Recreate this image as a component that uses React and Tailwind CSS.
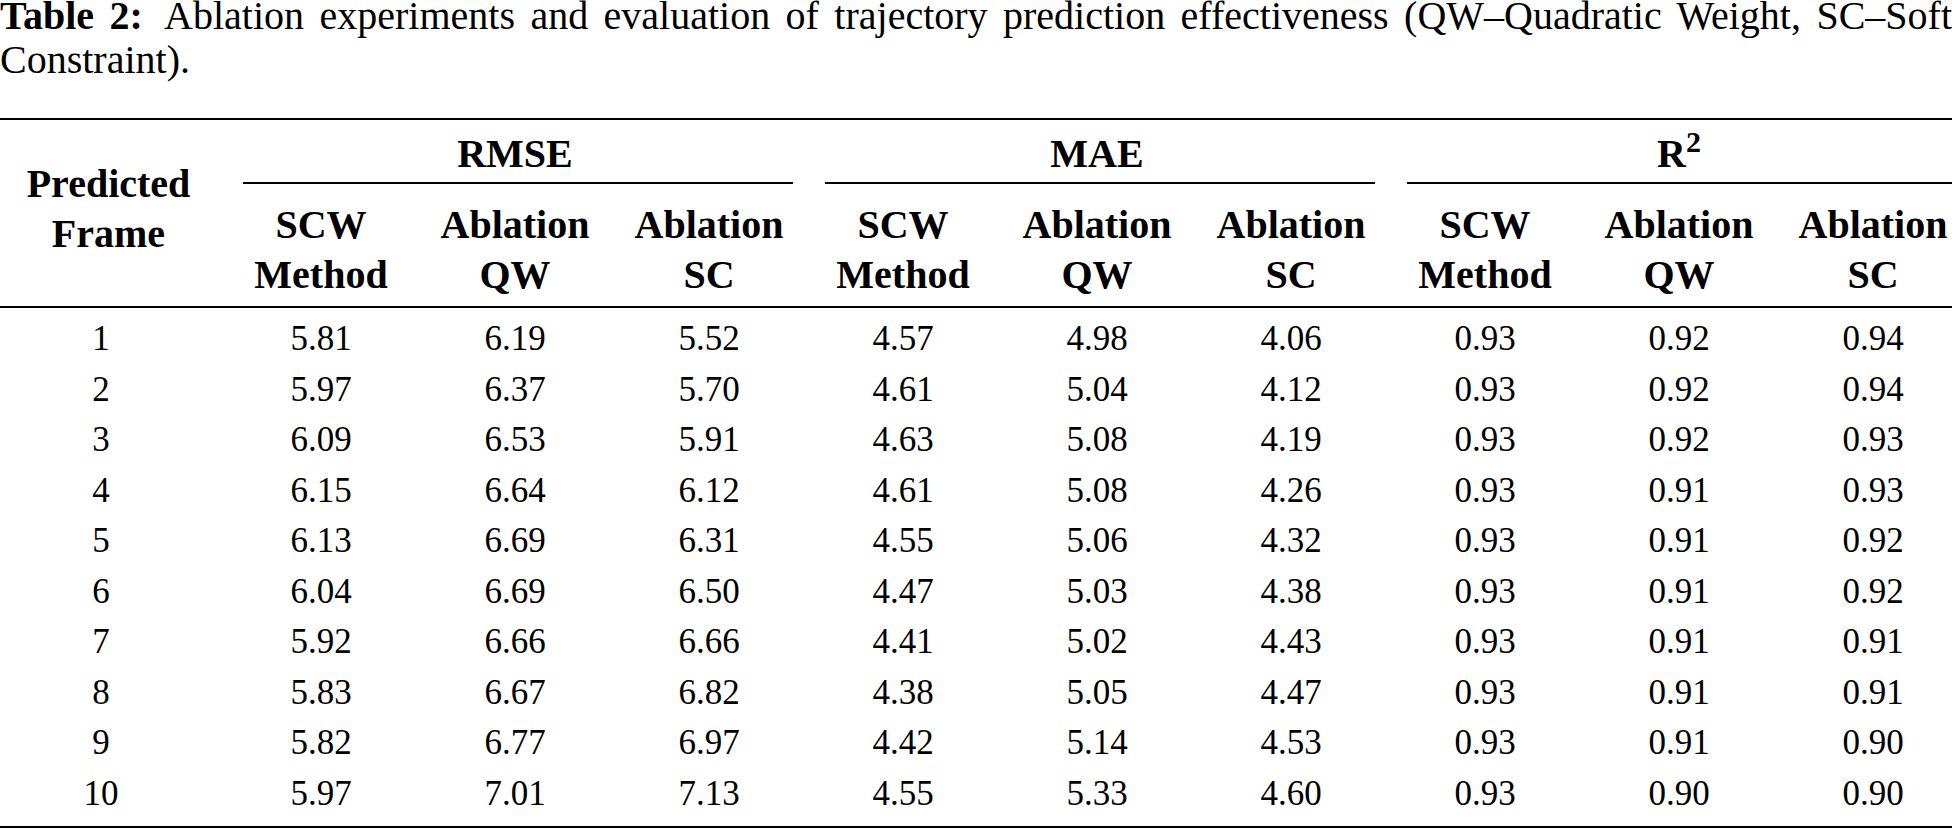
const groups = ["RMSE", "MAE", "R2"];

const subHeads = [
  ["SCW", "Method"],
  ["Ablation", "QW"],
  ["Ablation", "SC"],
];

const rows = [
  ["1", "5.81", "6.19", "5.52", "4.57", "4.98", "4.06", "0.93", "0.92", "0.94"],
  ["2", "5.97", "6.37", "5.70", "4.61", "5.04", "4.12", "0.93", "0.92", "0.94"],
  ["3", "6.09", "6.53", "5.91", "4.63", "5.08", "4.19", "0.93", "0.92", "0.93"],
  ["4", "6.15", "6.64", "6.12", "4.61", "5.08", "4.26", "0.93", "0.91", "0.93"],
  ["5", "6.13", "6.69", "6.31", "4.55", "5.06", "4.32", "0.93", "0.91", "0.92"],
  ["6", "6.04", "6.69", "6.50", "4.47", "5.03", "4.38", "0.93", "0.91", "0.92"],
  ["7", "5.92", "6.66", "6.66", "4.41", "5.02", "4.43", "0.93", "0.91", "0.91"],
  ["8", "5.83", "6.67", "6.82", "4.38", "5.05", "4.47", "0.93", "0.91", "0.91"],
  ["9", "5.82", "6.77", "6.97", "4.42", "5.14", "4.53", "0.93", "0.91", "0.90"],
  ["10", "5.97", "7.01", "7.13", "4.55", "5.33", "4.60", "0.93", "0.90", "0.90"],
];

function GroupLabel({ name }) {
  if (name === "R2") {
    return (
      <span>
        R<sup>2</sup>
      </span>
    );
  }
  return <span>{name}</span>;
}

export default function App() {
  return (
    <div className="w-[1952px] h-[830px] overflow-hidden bg-white text-black font-['Liberation_Serif','Times_New_Roman',serif]">

      {/* Caption */}
      <p className="-mt-[6px] text-[40px] leading-[44px] text-justify">
        <b className="mr-2">Table 2:</b> Ablation experiments and evaluation of trajectory prediction effectiveness (QW–Quadratic Weight, SC–Soft Constraint).
      </p>

      {/* Table */}
      <div className="mt-[36px] w-[1970px]">

        <div className="h-[2px] bg-black" />

        <div className="grid grid-cols-[224px_repeat(9,194px)] text-[40px] leading-[50px] font-bold">

          <div className="row-span-2 flex flex-col items-center justify-center pr-[7px] pb-[8px]">
            <span>Predicted</span>
            <span>Frame</span>
          </div>

          {groups.map((g) => (
            <div key={g} className="col-span-3 pt-[8.5px] text-center">
              <div>
                <GroupLabel name={g} />
              </div>
              <div className="mt-[3.5px] ml-[19px] mr-[13px] h-[2px] bg-black" />
            </div>
          ))}

          {groups.map((g) =>
            subHeads.map((s, i) => (
              <div key={g + i} className="pt-[15.5px] pb-[6.5px] flex flex-col items-center">
                <span>{s[0]}</span>
                <span>{s[1]}</span>
              </div>
            ))
          )}

        </div>

        <div className="h-[2px] bg-black" />

        <div className="pt-[6px] pb-[7px] text-[35px] leading-[50.5px]">
          {rows.map((r) => (
            <div key={r[0]} className="grid grid-cols-[224px_repeat(9,194px)] text-center">
              {r.map((v, i) => (
                <div key={i} className={i === 0 ? "pr-[22px]" : ""}>
                  {v}
                </div>
              ))}
            </div>
          ))}
        </div>

        <div className="h-[2px] bg-black" />

      </div>
    </div>
  );
}
